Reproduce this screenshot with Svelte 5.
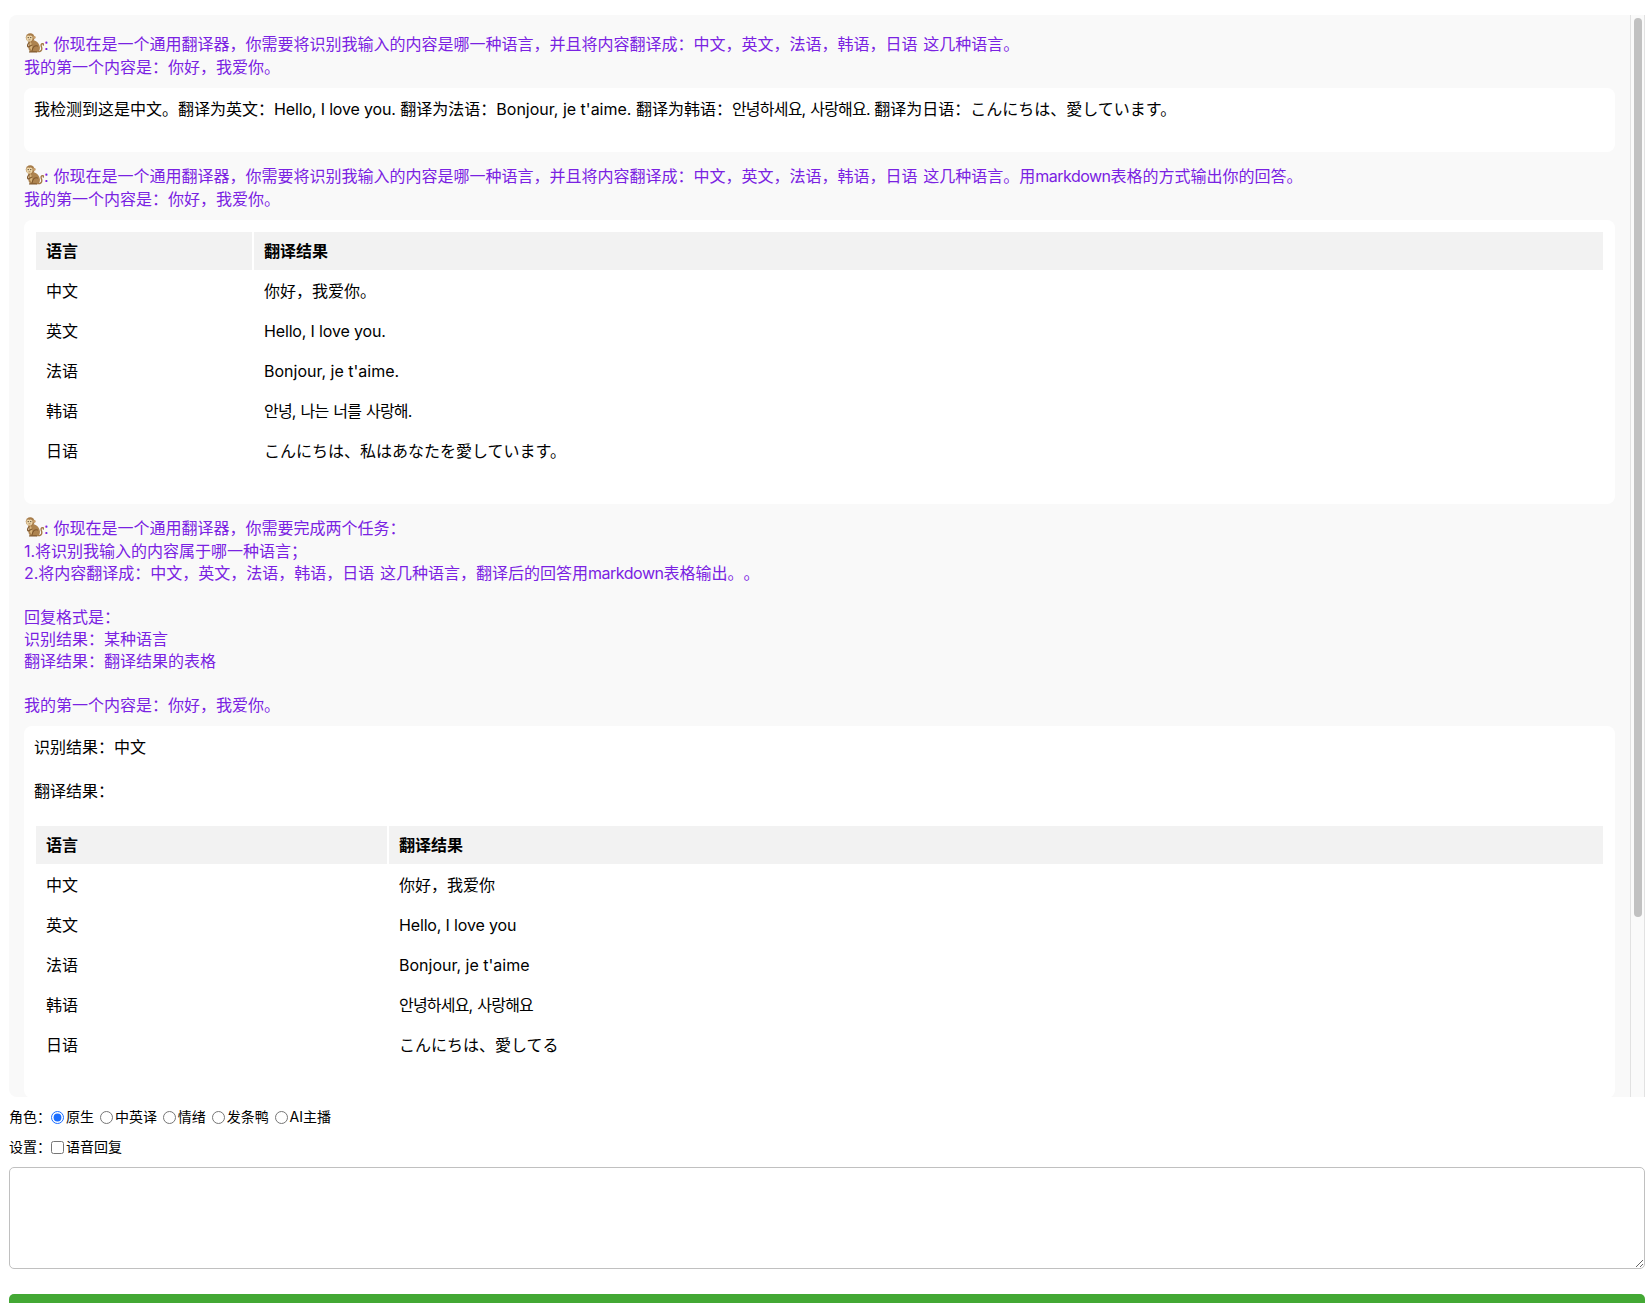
<script>
  const messages = [
    {
      prompt: [
        '你现在是一个通用翻译器，你需要将识别我输入的内容是哪一种语言，并且将内容翻译成：中文，英文，法语，韩语，日语 这几种语言。',
        '我的第一个内容是：你好，我爱你。'
      ],
      inline: true
    },
    {
      prompt: [
        '你现在是一个通用翻译器，你需要将识别我输入的内容是哪一种语言，并且将内容翻译成：中文，英文，法语，韩语，日语 这几种语言。用markdown表格的方式输出你的回答。',
        '我的第一个内容是：你好，我爱你。'
      ],
      size: 'narrow',
      rows: [
        ['中文', '你好，我爱你。'],
        ['英文', 'Hello, I love you.', 'en'],
        ['法语', "Bonjour, je t'aime."],
        ['韩语', '안녕, 나는 너를 사랑해.', 'ko'],
        ['日语', 'こんにちは、私はあなたを愛しています。']
      ]
    },
    {
      prompt: [
        '你现在是一个通用翻译器，你需要完成两个任务：',
        '1.将识别我输入的内容属于哪一种语言；',
        '2.将内容翻译成：中文，英文，法语，韩语，日语 这几种语言，翻译后的回答用markdown表格输出。。',
        '',
        '回复格式是：',
        '识别结果：某种语言',
        '翻译结果：翻译结果的表格',
        '',
        '我的第一个内容是：你好，我爱你。'
      ],
      intro: ['识别结果：中文', '', '翻译结果：', ''],
      size: 'wide',
      rows: [
        ['中文', '你好，我爱你'],
        ['英文', 'Hello, I love you', 'en'],
        ['法语', "Bonjour, je t'aime"],
        ['韩语', '안녕하세요, 사랑해요', 'ko'],
        ['日语', 'こんにちは、愛してる']
      ]
    }
  ];
  const roles = ['原生', '中英译', '情绪', '发条鸭', 'AI主播'];
  let role = $state('原生');
  let voice = $state(false);
  let draft = $state('');

  // Splits a line so that Latin words can be tracked separately from the CJK text.
  const parts = (line) => line.split(/([a-z]+)/);
</script>

{#snippet monkey()}
  <svg class="monkey" viewBox="0 0 20 20" aria-hidden="true">
    <path d="M12 18.300c4.500 1.200 6.600-1 5.500-4.200-.8-2.300-.4-3.700 1.300-3.500.8.200.9.900.5 1.400" fill="none" stroke="#a47a48" stroke-width="1.400" stroke-linecap="round" />
    <path d="M4.500 7.500C8.500 6 13.500 7.500 15.300 12c1.400 3.200.6 5.800-1.500 7H6.500c-1.500-1.500-2.300-3-2-5.500z" fill="#ad834f" />
    <path d="M6 9c2.500 1.500 3 5 1.500 8.500-1.800-2-2.300-5.500-1.500-8.500z" fill="#d8b57d" />
    <path d="M5 9.500c-1.500 2-2.200 3.600-.8 4.600L8 12M13.500 13c-3-.8-4.800 1-5.300 4.500M5.500 18.900h7" fill="none" stroke="#80592e" stroke-width="1.100" stroke-linecap="round" />
    <circle cx="6.200" cy="4.600" r="4.400" fill="#a77c49" />
    <circle cx="10.300" cy="4.400" r="1.400" fill="#c79f6d" />
    <path d="M2.300 4.900C2.300 2.600 4.100 2 5.300 3c1.400-.9 3.400-.2 3.300 1.900 0 2.500-1.500 3.600-3.100 3.600s-3.200-1.200-3.200-3.600z" fill="#ecd6aa" />
    <circle cx="4.200" cy="4.600" r=".6" fill="#3d2a18" />
    <circle cx="6.800" cy="4.600" r=".6" fill="#3d2a18" />
    <path d="M4.500 6.800h2" stroke="#80583a" stroke-width=".6" />
  </svg>
{/snippet}

<main>
  <section class="chat">
    <div class="log">
      {#each messages as m}
        <div class="prompt">
          {#each m.prompt as line, i}
            <div class="line">{#if i === 0}{@render monkey()}<span class="colon">:</span>{/if}{#each parts(line) as part, n}<span class:word={n % 2 === 1}>{part}</span>{/each}</div>
          {/each}
        </div>
        <div class="answer">
          {#if m.inline}
            <div class="line">我检测到这是中文。翻译为英文：<span class="en">Hello, I love you.</span> 翻译为法语：<span class="fr">Bonjour, je t'aime.</span> 翻译为韩语：<span class="ko">안녕하세요, 사랑해요.</span> 翻译为日语：こんにちは、愛しています。</div>
          {/if}
          {#each m.intro ?? [] as line}
            <div class="line">{line}</div>
          {/each}
          {#if m.rows}
            <table class={m.size}>
              <thead><tr><th>语言</th><th>翻译结果</th></tr></thead>
              <tbody>
                {#each m.rows as [name, text, cls]}
                  <tr><td>{name}</td><td><span class={cls}>{text}</span></td></tr>
                {/each}
              </tbody>
            </table>
          {/if}
          <div class="line"></div>
        </div>
      {/each}
    </div>
    <div class="track"><div class="thumb"></div></div>
  </section>

  <div class="options">
    <span>角色：</span>
    {#each roles as r}
      <label><input type="radio" name="role" value={r} bind:group={role} />{r}</label>
    {/each}
  </div>
  <div class="options settings">
    <span>设置：</span>
    <label><input type="checkbox" bind:checked={voice} />语音回复</label>
  </div>
  <textarea bind:value={draft}></textarea>
  <button aria-label="发送"></button>
</main>

<style>
  :global(body) { margin: 0; background: #fff; }
  main {
    box-sizing: border-box;
    height: 1303px;
    overflow: hidden;
    padding: 15px 6px 0 9px;
    display: flex;
    flex-direction: column;
    font: 16px/22px Inter, "Noto Sans CJK SC", "Noto Sans CJK JP", "Noto Sans CJK KR", sans-serif;
    text-spacing-trim: space-all;
    color: #000;
  }
  .chat {
    flex: none;
    height: 1082px;
    display: flex;
    overflow: hidden;
    background: #f9f9f9;
    border-radius: 8px 0 0 8px;
  }
  .log { flex: 1; min-width: 0; padding: 5px 15px 0; }
  .track {
    flex: none;
    width: 13px;
    padding-top: 3px;
    border: solid #e2e2e2;
    border-width: 0 1px;
    background: #fafafa;
  }
  .thumb { width: 8px; height: 899px; margin-left: 3px; border-radius: 4px; background: #c1c1c1; }
  .prompt { padding: 13px 0 10px; color: #7a22e2; word-spacing: 1.2px; }
  .line { height: 22px; white-space: pre; }
  .prompt .line:first-child { height: 23px; display: flex; }
  .monkey { width: 20px; height: 20px; }
  .colon { width: 9.5px; }
  .word { letter-spacing: -0.5px; }
  .answer { padding: 10px; background: #fff; border-radius: 8px; }
  .en { letter-spacing: -0.15px; }
  .ko { font-family: Inter, "Noto Sans CJK KR", sans-serif; letter-spacing: -0.8px; word-spacing: 1.2px; }
  table { width: 100%; table-layout: fixed; border-collapse: separate; border-spacing: 2px; }
  th, td { box-sizing: border-box; height: 38px; padding: 0 10px; text-align: left; }
  th { background: #f2f2f2; font-weight: 700; }
  .narrow th:first-child { width: 216px; }
  .wide th:first-child { width: 351px; }
  .options { flex: none; display: flex; height: 20px; margin-top: 10px; font-size: 14px; line-height: 20px; }
  .options label { display: flex; align-items: center; margin-right: 5.9px; }
  .options input { width: 13px; height: 13px; margin: 0 2px 0 0; accent-color: #1a6dff; }
  textarea {
    box-sizing: border-box;
    flex: none;
    display: block;
    width: 100%;
    height: 102px;
    margin: 10px 0 25px;
    border: 1px solid #c0c0c0;
    border-radius: 5px;
    background: #fff;
    resize: vertical;
    outline: none;
  }
  button { flex: none; height: 40px; border: 0; border-radius: 5px; background: #43a834; }
</style>
